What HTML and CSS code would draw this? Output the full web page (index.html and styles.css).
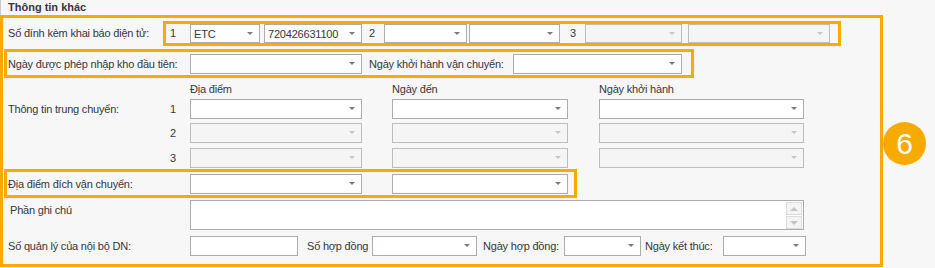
FILE: index.html
```html
<!DOCTYPE html>
<html lang="vi">
<head>
    <meta charset="utf-8">
    <title>Thông tin khác</title>
    <link rel="stylesheet" href="styles.css">
</head>
<body>
    <div class="titulo">Thông tin khác</div>

    <div class="marco">
        <div class="panel">

            <div class="fila1">
                <div class="lbl">Số đính kèm khai báo điện tử:</div>
                <div class="resalte r1">
                    <div class="celda c1">1</div>
                    <div class="cbo w70"><span>ETC</span></div>
                    <div class="cbo w98 ml4"><span>720426631100</span></div>
                    <div class="celda c2">2</div>
                    <div class="cbo w83"></div>
                    <div class="cbo w91 ml2"></div>
                    <div class="celda c3">3</div>
                    <div class="cbo w97 off"></div>
                    <div class="cbo w142 ml6 off"></div>
                </div>
            </div>

            <div class="resalte r2">
                <div class="lbl l183">Ngày được phép nhập kho đầu tiên:</div>
                <div class="cbo w172"></div>
                <div class="lbl l151">Ngày khởi hành vận chuyển:</div>
                <div class="cbo w169"></div>
            </div>

            <div class="cabecera">
                <div class="col1">Địa điểm</div>
                <div class="col2">Ngày đến</div>
                <div class="col3">Ngày khởi hành</div>
            </div>

            <div class="tramo">
                <div class="lbl l160">Thông tin trung chuyển:</div>
                <div class="num">1</div>
                <div class="cbo w172"></div>
                <div class="cbo w176 ml30"></div>
                <div class="cbo w205 ml31"></div>
            </div>
            <div class="tramo t2">
                <div class="lbl l160"></div>
                <div class="num">2</div>
                <div class="cbo w172 off"></div>
                <div class="cbo w176 ml30 off"></div>
                <div class="cbo w205 ml31 off"></div>
            </div>
            <div class="tramo t3">
                <div class="lbl l160"></div>
                <div class="num">3</div>
                <div class="cbo w172 off"></div>
                <div class="cbo w176 ml30 off"></div>
                <div class="cbo w205 ml31 off"></div>
            </div>

            <div class="resalte r3">
                <div class="lbl l183">Địa điểm đích vận chuyển:</div>
                <div class="cbo w172"></div>
                <div class="cbo w176 ml30"></div>
            </div>

            <div class="notas">
                <div class="lbl l187">Phần ghi chú</div>
                <div class="memo">
                    <div class="scroll">
                        <div class="btn up"></div>
                        <div class="btn down"></div>
                    </div>
                </div>
            </div>

            <div class="ultima">
                <div class="lbl l187b">Số quản lý của nội bộ DN:</div>
                <div class="txt w108"></div>
                <div class="lbl l74">Số hợp đồng</div>
                <div class="cbo w105"></div>
                <div class="lbl l87">Ngày hợp đồng:</div>
                <div class="cbo w77"></div>
                <div class="lbl l82">Ngày kết thúc:</div>
                <div class="cbo w83"></div>
            </div>

        </div>
        <div class="insignia">6</div>
    </div>
</body>
</html>
```

FILE: styles.css
```css
body{
    margin: 0;
    background-color: #f7f7f7;
    color: #363640;
    font-family: "Liberation Sans", Arial, sans-serif;
    font-size: 11px;
    letter-spacing: -0.2px;
}

.titulo{
    height: 15px;
    line-height: 15px;
    padding-left: 7px;
    font-weight: bold;
    font-size: 11px;
    letter-spacing: 0;
    border-left: 1px solid #c9c9c9;
    box-sizing: border-box;
}

.marco{
    display: flex;
    align-items: flex-start;
}

.panel{
    width: 883px;
    height: 252px;
    border: 3px solid #f7aa00;
    box-sizing: border-box;
}

.resalte{
    border: 3px solid #f7aa00;
    box-sizing: border-box;
    display: flex;
    align-items: center;
}

.lbl{
    box-sizing: border-box;
    white-space: nowrap;
}

/* fila 1 */
.fila1{
    display: flex;
    margin-top: 3px;
    height: 25px;
}
.fila1 > .lbl{
    width: 160px;
    padding-left: 5px;
    line-height: 25px;
}
.r1{
    width: 678px;
    height: 25px;
    align-items: stretch;
}
.celda{
    height: 19px;
    line-height: 19px;
    box-sizing: border-box;
}
.c1{ width: 24px; padding-left: 4px; }
.c2{ width: 22px; padding-left: 7px; }
.c3{ width: 25px; padding-left: 10px; }

/* combos */
.cbo, .txt{
    position: relative;
    height: 20px;
    line-height: 18px;
    border: 1px solid #acacac;
    background-color: #ffffff;
    box-sizing: border-box;
    padding-left: 3px;
    flex: none;
}
.r1 .cbo{ height: 19px; }
.cbo::after{
    content: "";
    position: absolute;
    right: 6px;
    top: 7px;
    border-left: 3px solid transparent;
    border-right: 3px solid transparent;
    border-top: 3px solid #7a7a7a;
}
.cbo.off{
    background-color: #f5f5f5;
    border-color: #bdbdbd;
}
.cbo.off::after{ border-top-color: #c6c6c6; }

.w70{ width: 70px; }
.w77{ width: 77px; }
.w83{ width: 83px; }
.w91{ width: 91px; }
.w97{ width: 97px; }
.w98{ width: 98px; }
.w105{ width: 105px; }
.w108{ width: 108px; }
.w142{ width: 142px; }
.w169{ width: 169px; }
.w172{ width: 172px; }
.w176{ width: 176px; }
.w205{ width: 205px; }
.ml2{ margin-left: 2px; }
.ml4{ margin-left: 4px; }
.ml6{ margin-left: 6px; }
.ml30{ margin-left: 30px; }
.ml31{ margin-left: 31px; }

/* fila 2 */
.r2{
    width: 690px;
    height: 29px;
    margin-top: 3px;
    margin-left: 1px;
}
.l183{ width: 183px; padding-left: 1px; }
.l151{ width: 151px; padding-left: 7px; }

/* trung chuyen */
.cabecera{
    display: flex;
    height: 16px;
    line-height: 16px;
    margin-top: 3px;
}
.col1{ margin-left: 187px; width: 202px; }
.col2{ width: 207px; }
.col3{ width: 205px; }

.tramo{
    display: flex;
    align-items: center;
    height: 20px;
    margin-top: 2px;
}
.tramo.t2{ margin-top: 4px; }
.tramo.t3{ margin-top: 5px; }
.l160{ width: 160px; padding-left: 5px; }
.num{
    width: 27px;
    padding-left: 7px;
    box-sizing: border-box;
}

.r3{
    width: 573px;
    height: 29px;
    margin-top: 1px;
    margin-left: 1px;
}

/* ghi chu */
.notas{
    display: flex;
    margin-top: 2px;
}
.l187{ width: 187px; padding-left: 7px; padding-top: 4px; }
.memo{
    width: 614px;
    height: 30px;
    border: 1px solid #acacac;
    background-color: #ffffff;
    box-sizing: border-box;
    display: flex;
    justify-content: flex-end;
}
.scroll{
    width: 16px;
    padding: 1px 1px 0 0;
}
.btn{
    position: relative;
    height: 13px;
    border: 1px solid #dcdcdc;
    background-color: #f4f4f4;
    box-sizing: border-box;
    margin-bottom: 1px;
}
.btn::after{
    content: "";
    position: absolute;
    left: 3px;
    top: 4px;
    border-left: 4px solid transparent;
    border-right: 4px solid transparent;
}
.up::after{ border-bottom: 4px solid #c4c4c4; }
.down::after{ border-top: 4px solid #c4c4c4; }

/* ultima fila */
.ultima{
    display: flex;
    align-items: center;
    margin-top: 6px;
    height: 20px;
}
.l187b{ width: 187px; padding-left: 5px; }
.l74{ width: 74px; padding-left: 9px; }
.l87{ width: 87px; padding-left: 6px; }
.l82{ width: 82px; padding-left: 4px; }

.insignia{
    width: 43px;
    height: 43px;
    margin-top: 107px;
    border-radius: 50%;
    background-color: #f7aa00;
    color: #ffffff;
    font-size: 30px;
    letter-spacing: 0;
    line-height: 43px;
    text-align: center;
}
```
